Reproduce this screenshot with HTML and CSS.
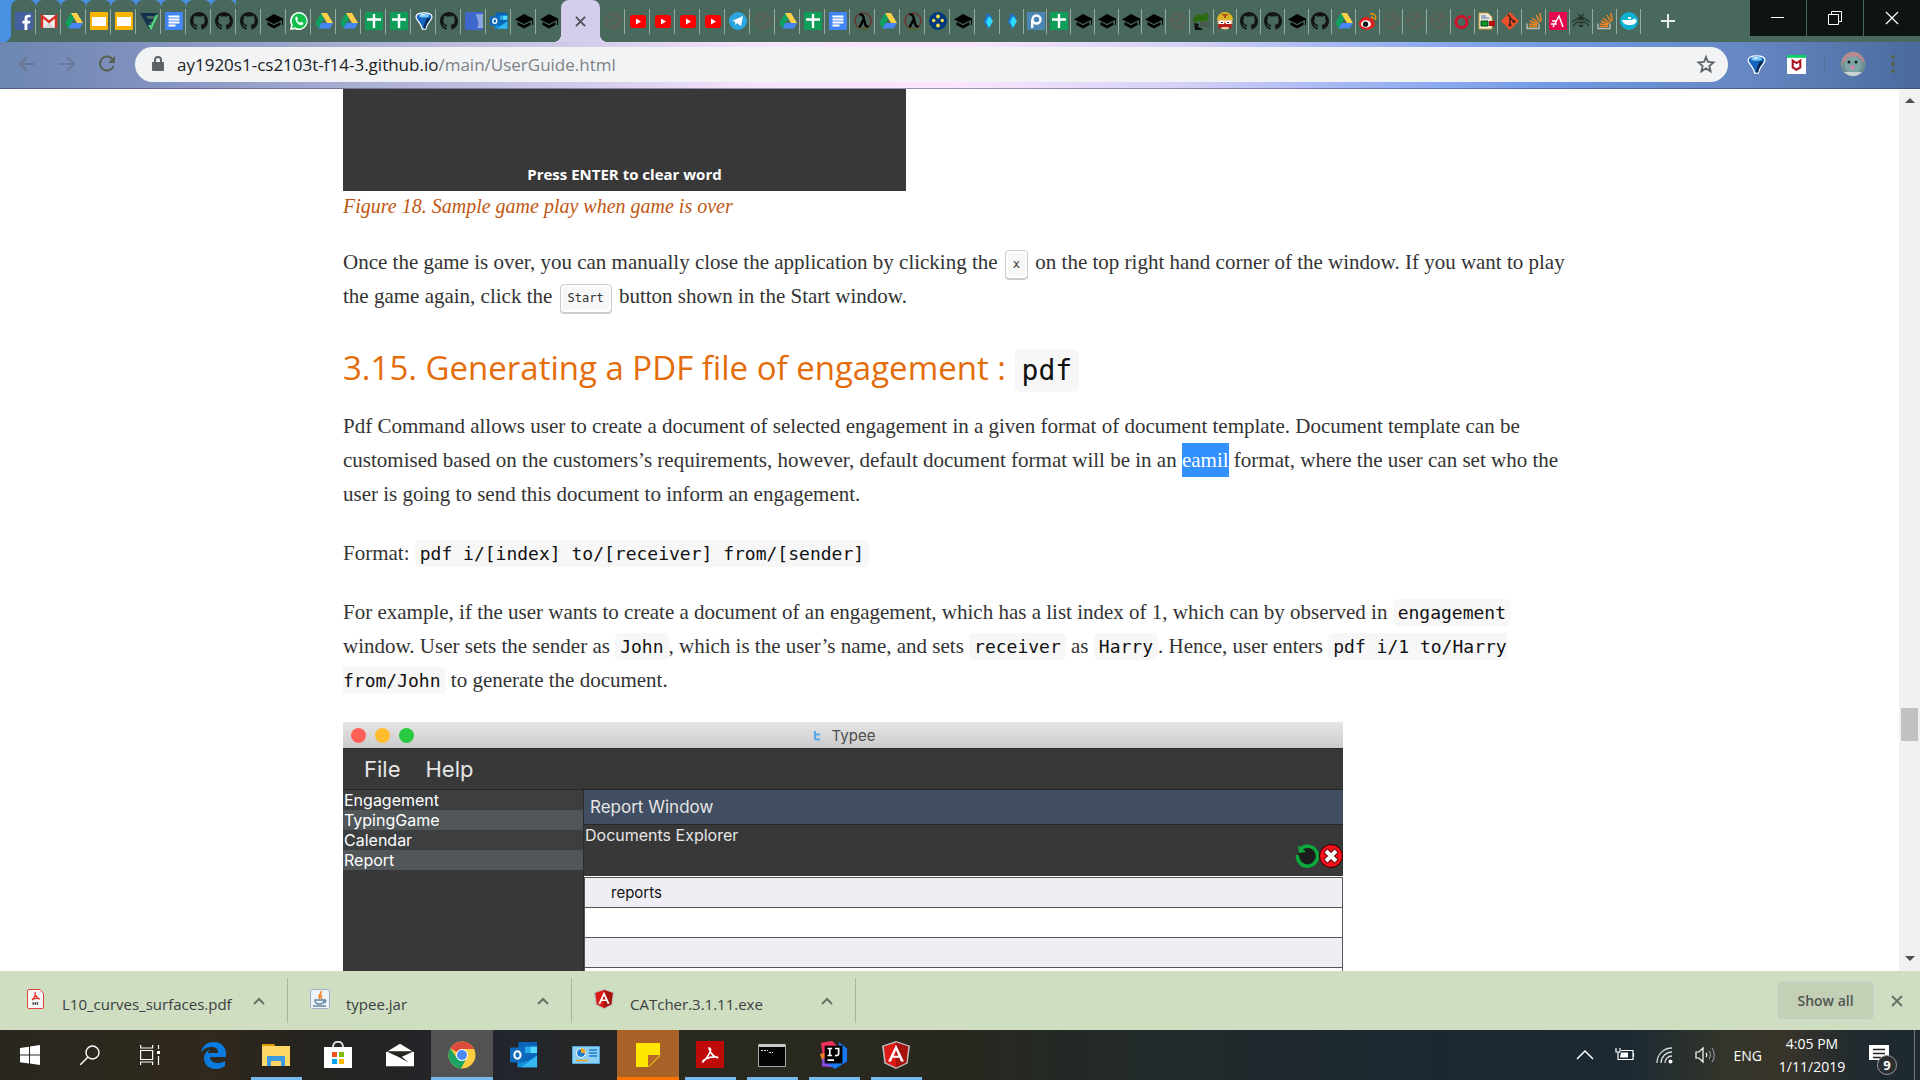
FILE: index.html
```html
<!DOCTYPE html>
<html lang="en">
<head>
<meta charset="utf-8">
<meta name="viewport" content="width=device-width, initial-scale=1">
<title>User Guide</title>
<link rel="stylesheet" href="styles.css">
</head>
<body>
<svg class="defs" aria-hidden="true">
  <defs>
    <symbol id="fb" viewBox="0 0 18 18"><path fill="#4460a0" d="M0 0h18v18H0z"/><path fill="#fff" d="M9.500 18v-6.500H7.300V8.700h2.200V6.500c0-2.600 1.400-3.800 3.700-3.800h2.300v2.600h-1.600c-1.200 0-1.500.5-1.500 1.500v1.900h3l-.4 2.800h-2.600V18z"/></symbol>
    <symbol id="gmail" viewBox="0 0 18 18"><path fill="#f2f2f2" d="M1 3h16v13H1z"/><path fill="#d9d9d9" d="M3 16l6-6 6 6z"/><path fill="none" stroke="#d93025" stroke-width="2.400" d="M2 16V4l7 6 7-6v12"/></symbol>
    <symbol id="drive" viewBox="0 0 18 18"><path fill="#11a15f" d="M6 1l3.300 5.400L3.500 16.500.3 11z"/><path fill="#ffcf48" d="M6 1h6l6 10h-6z"/><path fill="#4687f4" d="M6.500 11H18l-3.200 5.500H3.500z"/></symbol>
    <symbol id="slides" viewBox="0 0 18 18"><rect width="18" height="18" rx="1" fill="#f6b400"/><path fill="#fff" d="M2 5h14v9H2z"/></symbol>
    <symbol id="finance" viewBox="0 0 18 18"><path fill="#14304f" d="M0 1h18l-3 3H6l2 3h6l-2 3H9l2 3-2 4z"/><path fill="none" stroke="#4fd982" stroke-width="2.200" d="M9 13l2 3 6-13"/></symbol>
    <symbol id="docs" viewBox="0 0 18 18"><rect width="18" height="18" rx="1" fill="#4285f4"/><path stroke="#fff" stroke-width="1.800" d="M3.500 4.500h11M3.500 7.500h11M3.500 10.500h11M3.500 13.500h7"/></symbol>
    <symbol id="gh" viewBox="0 0 16 16"><path fill="#151515" d="M8 0C3.580 0 0 3.580 0 8c0 3.540 2.290 6.530 5.470 7.590.4.070.55-.17.55-.38v-1.490c-2.230.48-2.700-.95-2.700-.95-.36-.92-.89-1.170-.89-1.170-.73-.5.060-.49.060-.49.8.060 1.230.83 1.230.83.71 1.220 1.870.87 2.330.66.070-.52.28-.87.51-1.070-1.780-.2-3.640-.89-3.640-3.950 0-.87.310-1.590.82-2.150-.08-.2-.36-1.020.08-2.120 0 0 .67-.21 2.200.82a7.700 7.700 0 014 0c1.530-1.040 2.200-.82 2.200-.82.44 1.100.16 1.920.08 2.120.51.560.82 1.270.82 2.150 0 3.070-1.870 3.750-3.650 3.950.29.250.54.730.54 1.480v2.200c0 .21.150.46.550.38A8 8 0 0016 8c0-4.420-3.580-8-8-8z"/></symbol>
    <symbol id="cap" viewBox="0 0 18 18"><path fill="#000" d="M9 2l9 4.500V13h-1V8l-8 4-9-4.500z"/><path fill="#000" d="M2.500 10L9 13.300l6.500-3.300v3L9 16.500 2.500 13z"/></symbol>
    <symbol id="wa" viewBox="0 0 18 18"><path fill="#fff" d="M9 0a9 9 0 11-4 17.200L0 18l1-5A9 9 0 019 0z"/><path fill="#10c04a" d="M9 1.500a7.500 7.500 0 11-3.700 14L2 16l.8-3.200A7.500 7.500 0 019 1.500z"/><path fill="#fff" d="M5.500 5l1.500-.5L8 7l-.8 1.200c.6 1.200 1.500 2 2.800 2.600l1-1 2.400 1.200c0 1.500-1 2.200-2.200 2.200C8 13 4.600 9 5.500 5z"/></symbol>
    <symbol id="sheets" viewBox="0 0 18 18"><rect width="18" height="18" rx="1" fill="#0f9d58"/><path stroke="#fff" stroke-width="2.400" d="M9 2v14M2 7.500h14"/></symbol>
    <symbol id="balloon" viewBox="0 0 18 18"><path fill="#1565c0" stroke="#fff" stroke-width="1.200" d="M9 .8c5 0 8 1.500 8 4.200 0 2.500-3.800 5-5.500 9.500l-.8 2.700H7.300l-.8-2.700C4.800 10 1 7.500 1 5 1 2.300 4 .8 9 .8z"/><path fill="#7cc8f5" d="M9 1.500c3 0 5 .8 5 2.500 0 1-2.500 1.500-5 1.500S4 5 4 4c0-1.700 2-2.500 5-2.500z"/><path fill="#dff2fd" d="M6 2.500c1-.8 4-.8 4 0 0 1-4 1.500-4 0z"/><path fill="#0a2a55" d="M12 6h3.500c-1 2.500-3.500 4.500-4.500 8.500l-.5 2h-2c.5-4 2-7 3.500-10.500z"/></symbol>
    <symbol id="bluetile" viewBox="0 0 18 18"><path fill="#3f68cd" d="M0 0h18v18H0z"/><path fill="#8aa4e0" d="M11 2h7v14h-6c3-5 0-8-1-14z"/></symbol>
    <symbol id="outlook" viewBox="0 0 30 28"><path fill="#0a64b8" d="M9 0h20v27H9z"/><path fill="#28a8ea" d="M16 5h7v7h-7z"/><path fill="#50d9ff" d="M22 5h7v7h-7z"/><path fill="#1490df" d="M8 15l10 6 11-7v13H8z"/><path fill="#35b8f1" d="M12 27l17-12v12z"/><rect y="6" width="16" height="16" rx="1" fill="#0f6cbd"/><ellipse cx="8" cy="14" rx="3.300" ry="4" fill="none" stroke="#fff" stroke-width="2.200"/></symbol>
    <symbol id="globe" viewBox="0 0 18 18"><g fill="none" stroke="#635f56" stroke-width="1.400"><circle cx="9" cy="9" r="7.500"/><path d="M2 7c3-1 3 3 6 2 2-1 0-3 3-3 2 0 1-3 0-4M9 16c0-3 3-2 4-5 1-1 2 0 3-1"/></g></symbol>
    <symbol id="yt" viewBox="0 0 18 18"><rect x="1" y="3" width="16" height="13" rx="3" fill="#f00"/><path fill="#fff" d="M7 6.500l5 3-5 3z"/></symbol>
    <symbol id="tg" viewBox="0 0 18 18"><circle cx="9" cy="9" r="9" fill="#2ca5e0"/><path fill="#fff" d="M3 9l11-5-2 10-4-3-1.500 2-.5-3.500z"/></symbol>
    <symbol id="lambda" viewBox="0 0 18 18"><circle cx="9" cy="9" r="8" fill="none" stroke="#6e3330" stroke-width="1.500"/><path fill="none" stroke="#5a6b2a" stroke-width="1.500" d="M4 15a8 8 0 0011 0"/><path fill="none" stroke="#000" stroke-width="2.400" d="M5.500 2.500c4-1 4 3 5.500 9 .6 2.500 1.500 3.500 3.500 2.500M9.500 7.500l-4 8"/></symbol>
    <symbol id="dots" viewBox="0 0 18 18"><circle cx="9" cy="9" r="9" fill="#013a7c"/><g fill="#ffe04a"><circle cx="9" cy="4.500" r="1.900"/><circle cx="9" cy="13.500" r="1.900"/><circle cx="4.700" cy="8.500" r="1.700"/><circle cx="13.300" cy="8.500" r="1.700"/></g></symbol>
    <symbol id="diamond" viewBox="0 0 18 18"><path fill="#1976d2" d="M8 1l5 4-3 12-5-7z"/><path fill="#2fd8ff" d="M10 4l4 5-4 7-3-6z"/></symbol>
    <symbol id="p" viewBox="0 0 18 18"><path fill="#4b86b4" d="M0 0h18v18H0z"/><circle cx="9.500" cy="7.500" r="4" fill="none" stroke="#fff" stroke-width="2.400"/><path stroke="#fff" stroke-width="2.400" d="M5.200 16V8"/></symbol>
    <symbol id="tree" viewBox="0 0 18 18"><path fill="#2c6b12" d="M1 5l4-3 4 1 4-3 3 3-1 5-5 2-4-1-4 2-2-3z"/><path fill="#4c5a52" d="M7 10h10v5H7z"/><path fill="#111" d="M1 11l5 1-1 3 5 2-2 1H2z"/></symbol>
    <symbol id="mason" viewBox="0 0 18 18"><circle cx="9" cy="10" r="7.500" fill="#efc7a0"/><path fill="#d9b526" d="M1 8c0-5 4-8 8-8s8 3 8 8z"/><path fill="#a8531c" d="M6 2h6v1.500h-2V6H8V3.500H6z"/><path fill="#b71c1c" d="M2 12c4-1 10-1 14 0l-1 5-3-2H6l-3 2z"/><path fill="#fff" d="M3 9h5v3H3zM10 9h5v3h-5z"/><path fill="#333" d="M5 10h2v1H5zM11 10h2v1h-2z"/></symbol>
    <symbol id="weibo" viewBox="0 0 18 18"><path fill="#e02020" d="M0 12C0 7 6 4 9 5c1 0 1 1 1 2 3-1 5 0 4 2 3 1 3 6-3 8C6 19 0 16 0 12z"/><ellipse cx="7" cy="12" rx="5" ry="3.700" fill="#fff"/><circle cx="6.500" cy="12.200" r="2.600" fill="#111"/><path fill="none" stroke="#f39800" stroke-width="1.500" d="M11 2c4-1 7 2 5 6M12 5c2 0 2 1 2 2"/></symbol>
    <symbol id="oring" viewBox="0 0 18 18"><circle cx="7.500" cy="10" r="5.500" fill="none" stroke="#d0112b" stroke-width="3"/><circle cx="15.500" cy="5" r="1.700" fill="#d0112b"/></symbol>
    <symbol id="note" viewBox="0 0 18 18"><path fill="#f4ead0" stroke="#c9a24a" d="M1 1h9l4 4v12H1z"/><path stroke="#3b6ec5" d="M3 4h5M3 6h8"/><path fill="#0c9a18" stroke="#043" d="M3 9h7v5H3z"/><path fill="#b01010" d="M11 9h6v5h-6z"/></symbol>
    <symbol id="git" viewBox="0 0 18 18"><path fill="#f34f29" d="M9 0l9 9-9 9-9-9z"/><path fill="none" stroke="#38261f" stroke-width="1.500" d="M7 2.500l2 2.500v8M9 6l4 3.500"/><circle cx="9" cy="13" r="1.500" fill="#38261f"/><circle cx="13" cy="9.500" r="1.500" fill="#38261f"/></symbol>
    <symbol id="so" viewBox="0 0 18 18"><path fill="none" stroke="#b9bcb8" stroke-width="1.400" d="M2 11.500v5h12v-5"/><path stroke="#f08424" stroke-width="1.500" d="M4 14.500h8M4 12l8 1M5 9l7.500 3M7 6l6.500 5M11 3l4 7M15 1l1 8"/></symbol>
    <symbol id="ab" viewBox="0 0 18 18"><rect width="18" height="18" rx="1" fill="#e6094e"/><path fill="none" stroke="#fff" stroke-width="1.500" d="M3 9h5M2 12h6M4 15l6-11 4 11"/></symbol>
    <symbol id="bee" viewBox="0 0 18 18"><g fill="none" stroke="#24332c" stroke-width="1.200"><path d="M0 10l6-4 6 0 6 4M1 14l5-5M17 14l-5-5M6 2l3 3 3-3"/></g><ellipse cx="9" cy="9.500" rx="3" ry="6" fill="#24332c"/><path stroke="#617a6c" d="M6 9h6M6 12h6"/></symbol>
    <symbol id="docker" viewBox="0 0 18 18"><ellipse cx="9" cy="9" rx="9" ry="9" fill="#0db1d4"/><path fill="#fff" d="M2 8h9l3-1 2-1-1 2h2c-1 4-4 5-7 5-4 0-7-1-8-5zM8 5h3v2H8z"/></symbol>
    <symbol id="angular" viewBox="0 0 30 30"><path fill="#b9bcbd" d="M15 0l15 5-2.500 19L15 30 2.500 24 0 5z"/><path fill="#dd1b16" d="M15 1.500L28 6l-2 17-11 5.500L4 23 2 6z"/><path fill="#a6120d" d="M15 1.500L28 6l-2 17-11 5.500z"/><path fill="#fff" d="M15 4l8.500 18h-3.200l-1.700-4h-7.200l-1.700 4H6.500zm0 6l-2.500 5.700h5z"/></symbol>
    <symbol id="up" viewBox="0 0 12 8"><path fill="none" stroke="#6b7168" stroke-width="2" d="M1 7l5-5 5 5"/></symbol>
  </defs>
</svg>

<header class="browser">
  <nav class="tabstrip" aria-label="Open tabs">
    <div class="tabs tabs--first">
      <button class="tab tab--round tab--edge" aria-label="Facebook"><svg><use href="#fb"/></svg></button>
      <button class="tab tab--round" aria-label="Gmail"><svg><use href="#gmail"/></svg></button>
      <button class="tab tab--round" aria-label="Drive"><svg><use href="#drive"/></svg></button>
      <button class="tab tab--round" aria-label="Slides"><svg><use href="#slides"/></svg></button>
      <button class="tab tab--round" aria-label="Slides"><svg><use href="#slides"/></svg></button>
      <button class="tab tab--round" aria-label="Finance"><svg><use href="#finance"/></svg></button>
      <button class="tab tab--round" aria-label="Docs"><svg><use href="#docs"/></svg></button>
      <button class="tab tab--round" aria-label="GitHub"><svg><use href="#gh"/></svg></button>
      <button class="tab tab--round" aria-label="GitHub"><svg><use href="#gh"/></svg></button>
      <button class="tab" aria-label="GitHub"><svg><use href="#gh"/></svg></button>
      <button class="tab" aria-label="Courses"><svg><use href="#cap"/></svg></button>
      <button class="tab" aria-label="WhatsApp"><svg><use href="#wa"/></svg></button>
      <button class="tab" aria-label="Drive"><svg><use href="#drive"/></svg></button>
      <button class="tab" aria-label="Drive"><svg><use href="#drive"/></svg></button>
      <button class="tab" aria-label="Sheets"><svg><use href="#sheets"/></svg></button>
      <button class="tab" aria-label="Sheets"><svg><use href="#sheets"/></svg></button>
      <button class="tab" aria-label="Balloon"><svg><use href="#balloon"/></svg></button>
      <button class="tab" aria-label="GitHub"><svg><use href="#gh"/></svg></button>
      <button class="tab" aria-label="Page"><svg><use href="#bluetile"/></svg></button>
      <button class="tab" aria-label="Outlook"><svg><use href="#outlook"/></svg></button>
      <button class="tab" aria-label="Courses"><svg><use href="#cap"/></svg></button>
      <button class="tab tab--last" aria-label="Courses"><svg><use href="#cap"/></svg></button>
    </div>
    <button class="tab-active" aria-label="Close tab"><svg viewBox="0 0 12 12"><path stroke="#4f4f55" stroke-width="2" d="M1 1l10 10M11 1L1 11"/></svg></button>
    <div class="tabs tabs--middle">
      <button class="tab" aria-label="Page"><svg><use href="#globe"/></svg></button>
      <button class="tab" aria-label="YouTube"><svg><use href="#yt"/></svg></button>
      <button class="tab" aria-label="YouTube"><svg><use href="#yt"/></svg></button>
      <button class="tab" aria-label="YouTube"><svg><use href="#yt"/></svg></button>
      <button class="tab" aria-label="YouTube"><svg><use href="#yt"/></svg></button>
      <button class="tab" aria-label="Telegram"><svg><use href="#tg"/></svg></button>
      <button class="tab" aria-label="Page"><svg><use href="#globe"/></svg></button>
      <button class="tab" aria-label="Drive"><svg><use href="#drive"/></svg></button>
      <button class="tab" aria-label="Sheets"><svg><use href="#sheets"/></svg></button>
      <button class="tab" aria-label="Docs"><svg><use href="#docs"/></svg></button>
      <button class="tab" aria-label="Lambda"><svg><use href="#lambda"/></svg></button>
      <button class="tab" aria-label="Drive"><svg><use href="#drive"/></svg></button>
      <button class="tab" aria-label="Lambda"><svg><use href="#lambda"/></svg></button>
      <button class="tab" aria-label="Page"><svg><use href="#dots"/></svg></button>
      <button class="tab" aria-label="Courses"><svg><use href="#cap"/></svg></button>
      <button class="tab" aria-label="Page"><svg><use href="#diamond"/></svg></button>
    </div>
    <div class="tabs tabs--narrow">
      <button class="tab" aria-label="Page"><svg><use href="#diamond"/></svg></button>
      <button class="tab" aria-label="Page"><svg><use href="#p"/></svg></button>
      <button class="tab" aria-label="Sheets"><svg><use href="#sheets"/></svg></button>
      <button class="tab" aria-label="Courses"><svg><use href="#cap"/></svg></button>
      <button class="tab" aria-label="Courses"><svg><use href="#cap"/></svg></button>
      <button class="tab" aria-label="Courses"><svg><use href="#cap"/></svg></button>
      <button class="tab" aria-label="Courses"><svg><use href="#cap"/></svg></button>
      <button class="tab" aria-label="Page"><svg><use href="#globe"/></svg></button>
      <button class="tab" aria-label="Page"><svg><use href="#tree"/></svg></button>
      <button class="tab" aria-label="Page"><svg><use href="#mason"/></svg></button>
      <button class="tab" aria-label="GitHub"><svg><use href="#gh"/></svg></button>
      <button class="tab" aria-label="GitHub"><svg><use href="#gh"/></svg></button>
      <button class="tab" aria-label="Courses"><svg><use href="#cap"/></svg></button>
      <button class="tab" aria-label="GitHub"><svg><use href="#gh"/></svg></button>
      <button class="tab" aria-label="Drive"><svg><use href="#drive"/></svg></button>
      <button class="tab" aria-label="Weibo"><svg><use href="#weibo"/></svg></button>
      <button class="tab" aria-label="Page"><svg><use href="#globe"/></svg></button>
      <button class="tab" aria-label="Page"><svg><use href="#globe"/></svg></button>
      <button class="tab" aria-label="Page"><svg><use href="#globe"/></svg></button>
      <button class="tab" aria-label="Page"><svg><use href="#oring"/></svg></button>
      <button class="tab" aria-label="Page"><svg><use href="#note"/></svg></button>
      <button class="tab" aria-label="Git"><svg><use href="#git"/></svg></button>
      <button class="tab" aria-label="Stack Overflow"><svg><use href="#so"/></svg></button>
      <button class="tab" aria-label="Page"><svg><use href="#ab"/></svg></button>
      <button class="tab" aria-label="Page"><svg><use href="#bee"/></svg></button>
      <button class="tab" aria-label="Stack Overflow"><svg><use href="#so"/></svg></button>
      <button class="tab" aria-label="Docker"><svg><use href="#docker"/></svg></button>
    </div>
    <button class="newtab" aria-label="New tab"><svg viewBox="0 0 14 14"><path stroke="#e6ece9" stroke-width="2" d="M7 0v14M0 7h14"/></svg></button>
    <div class="winctl">
      <button aria-label="Minimize"><svg viewBox="0 0 14 14"><path stroke="#fff" d="M0 6.500h13"/></svg></button>
      <button aria-label="Restore"><svg viewBox="0 0 14 14"><path fill="none" stroke="#fff" d="M.5 3.500h10v10H.5zM3.500 3V.5h10v10H11"/></svg></button>
      <button aria-label="Close"><svg viewBox="0 0 14 14"><path stroke="#fff" stroke-width="1.200" d="M1 1l12 12M13 1L1 13"/></svg></button>
    </div>
  </nav>
  <div class="toolbar">
    <button class="nav" aria-label="Back"><svg viewBox="0 0 18 18"><path fill="none" stroke="#6a7795" stroke-width="2" d="M17 9H2M9 2L2 9l7 7"/></svg></button>
    <button class="nav" aria-label="Forward"><svg viewBox="0 0 18 18"><path fill="none" stroke="#6c7897" stroke-width="2" d="M1 9h15M9 2l7 7-7 7"/></svg></button>
    <button class="nav" aria-label="Reload"><svg viewBox="0 0 18 18"><path fill="none" stroke="#56624f" stroke-width="2" d="M15.500 11A7 7 0 1115 5"/><path fill="#56624f" d="M17 1v7h-7z"/></svg></button>
    <div class="omnibox">
      <svg class="lock" viewBox="0 0 12 16"><path fill="#5f6368" d="M0 6h12v8a1 1 0 01-1 1H1a1 1 0 01-1-1z"/><path fill="none" stroke="#5f6368" stroke-width="2" d="M3 7V4a3 3 0 016 0v3"/></svg>
      <span class="url"><span class="host">ay1920s1-cs2103t-f14-3.github.io</span>/main/UserGuide.html</span>
      <button class="star" aria-label="Bookmark"><svg viewBox="0 0 20 20"><path fill="none" stroke="#5f6368" stroke-width="1.800" d="M10 3l2 5 5.500.4-4.200 3.600 1.300 5.300L10 14.400l-4.600 2.900L6.700 12 2.500 8.400 8 8z"/></svg></button>
    </div>
    <button class="ext" aria-label="Balloon"><svg viewBox="0 0 18 18"><use href="#balloon"/></svg></button>
    <button class="ext" aria-label="Shield"><svg viewBox="0 0 20 20"><path fill="#fff" d="M0 0h20v20H0z"/><path fill="#0bd06a" d="M0 0h20v3H0z"/><path fill="none" stroke="#a81520" stroke-width="2.200" d="M6 6l4 2.500L14 6v7l-4 2.500L6 13z"/></svg></button>
    <span class="rule"></span>
    <button class="avatar" aria-label="Profile"><svg viewBox="0 0 26 26"><circle cx="13" cy="13" r="12.500" fill="#6f8f93"/><path fill="#b98a92" d="M3 7C8-1 18-1 23 7l2 6-4-4-4-4-4 3-4-2-5 5-3 4z"/><circle cx="13" cy="14" r="8.500" fill="#7ea5a6"/><circle cx="9" cy="11" r="1.500" fill="#122"/><circle cx="16" cy="11" r="1.500" fill="#122"/><path fill="#f07aa5" d="M10 15h5l-2.500 4z"/><path fill="#c9d3d4" d="M4 21h18a12 12 0 01-18 0z"/></svg></button>
    <button class="more" aria-label="Menu"><svg viewBox="0 0 4 18"><g fill="#56624f"><circle cx="2" cy="2" r="2"/><circle cx="2" cy="9" r="2"/><circle cx="2" cy="16" r="2"/></g></svg></button>
  </div>
</header>

<div class="viewport">
  <main class="page">
    <article class="content">
      <figure class="game">
        <div class="game-shot">Press ENTER to clear word</div>
        <figcaption>Figure 18. Sample game play when game is over</figcaption>
      </figure>
      <p>Once the game is over, you can manually close the application by clicking the <kbd>x</kbd> on the top right hand corner of the window. If you want to play the game again, click the <kbd>Start</kbd> button shown in the Start window.</p>
      <h3>3.15. Generating a PDF file of engagement : <code>pdf</code></h3>
      <p>Pdf Command allows user to create a document of selected engagement in a given format of document template. Document template can be customised based on the customers’s requirements, however, default document format will be in an <mark>eamil</mark> format, where the user can set who the user is going to send this document to inform an engagement.</p>
      <p>Format: <code>pdf i/[index] to/[receiver] from/[sender]</code></p>
      <p>For example, if the user wants to create a document of an engagement, which has a list index of 1, which can by observed in <code>engagement</code> window. User sets the sender as <code>John</code>, which is the user’s name, and sets <code>receiver</code> as <code>Harry</code>. Hence, user enters <code>pdf i/1 to/Harry from/John</code> to generate the document.</p>

      <section class="typee">
        <div class="typee-title">
          <div class="lights"><i class="red"></i><i class="amber"></i><i class="green"></i></div>
          <div class="typee-name"><svg viewBox="0 0 8 10"><path fill="none" stroke="#55a8ee" stroke-width="2.200" d="M2 0v6.500C2 8 3 8.500 4 8.500h3M2 3.500h5"/></svg>Typee</div>
        </div>
        <div class="typee-menu"><span>File</span><span>Help</span></div>
        <div class="typee-body">
          <ul class="typee-side"><li>Engagement</li><li>TypingGame</li><li>Calendar</li><li>Report</li></ul>
          <div class="typee-main">
            <div class="typee-head">Report Window</div>
            <div class="typee-tools">
              <span>Documents Explorer</span>
              <div class="typee-actions">
                <button aria-label="Refresh"><svg viewBox="0 0 24 24"><circle cx="12" cy="12" r="9" fill="#1c1c1c"/><path fill="none" stroke="#0ca93c" stroke-width="3.500" d="M2.500 11A10 10 0 106 4.500"/><path fill="#0ca93c" d="M3 1l1 8 7-1z"/></svg></button>
                <button aria-label="Delete"><svg viewBox="0 0 24 24"><circle cx="12" cy="12" r="11.500" fill="#f5101c" stroke="#200" /><path stroke="#400" stroke-width="6" d="M6.500 6.500l11 11M17.500 6.500l-11 11"/><path stroke="#fff" stroke-width="4" d="M7 7l10 10M17 7L7 17"/></svg></button>
              </div>
            </div>
            <table class="reports">
              <tbody><tr><td>reports</td></tr><tr><td></td></tr><tr><td></td></tr><tr><td></td></tr></tbody>
            </table>
          </div>
        </div>
      </section>
    </article>
  </main>
  <div class="scrollbar" aria-hidden="true">
    <svg viewBox="0 0 10 6"><path fill="#505050" d="M0 5l5-5 5 5z"/></svg>
    <div class="before"></div>
    <div class="thumb"></div>
    <div class="after"></div>
    <svg viewBox="0 0 10 6"><path fill="#505050" d="M0 0l5 5 5-5z"/></svg>
  </div>
</div>

<section class="downloads" aria-label="Downloads">
  <div class="download">
    <svg viewBox="0 0 18 20"><path fill="#f6f6f6" stroke="#e0453a" d="M2 .5h11l3.500 4V18a1.500 1.500 0 01-1.500 1.500H2A1.500 1.500 0 01.5 18V2A1.500 1.500 0 012 .5z"/><path fill="none" stroke="#e8332a" stroke-width="1.300" d="M8 3c1 3-1 6-3 8 2-2 6-2 8-1-3-1-5-4-5-7z"/><path stroke="#444" stroke-width="2.500" stroke-dasharray="1.500 .6" d="M5.500 14.500h6"/></svg>
    <a href="#">L10_curves_surfaces.pdf</a>
    <button aria-label="Options"><svg><use href="#up"/></svg></button>
  </div>
  <div class="download">
    <svg viewBox="0 0 20 20"><rect x=".5" y=".5" width="19" height="19" rx="2" fill="#eef3f8" stroke="#9db1c6"/><path fill="none" stroke="#ee7d22" stroke-width="1.500" d="M11 2c1 3-4 4-1 8M12 6c-2 1-1 2 0 4"/><path fill="none" stroke="#6787a6" stroke-width="1.500" d="M5 11h9c0 3-1 4-4.500 4S5 14 5 11zM14 11c3-1 2 3-1 3M3 17h13"/></svg>
    <a href="#">typee.jar</a>
    <button aria-label="Options"><svg><use href="#up"/></svg></button>
  </div>
  <div class="download">
    <svg viewBox="0 0 30 30"><use href="#angular"/></svg>
    <a href="#">CATcher.3.1.11.exe</a>
    <button aria-label="Options"><svg><use href="#up"/></svg></button>
  </div>
  <button class="showall">Show all</button>
  <button class="dismiss" aria-label="Close downloads"><svg viewBox="0 0 12 12"><path stroke="#6b7168" stroke-width="2" d="M1 1l10 10M11 1L1 11"/></svg></button>
</section>

<footer class="taskbar">
  <div class="apps">
    <div class="system">
      <button aria-label="Start"><svg viewBox="0 0 20 20"><path fill="#fff" d="M0 3l9-1.300V9.500H0zM10 1.500L20 0v9.500H10zM0 10.500h9v8L0 17.200zM10 10.500h10V20l-10-1.500z"/></svg></button>
      <button aria-label="Search"><svg viewBox="0 0 20 20"><circle cx="12.500" cy="7.500" r="6.500" fill="none" stroke="#fff" stroke-width="1.400"/><path stroke="#fff" stroke-width="1.400" d="M8 12l-8 8"/></svg></button>
      <button aria-label="Task view"><svg viewBox="0 0 20 20"><path fill="none" stroke="#fff" stroke-width="1.200" d="M.6 0v3h12V0M.6 20v-3h12v3M.6 5.500h12v9H.6zM18.500 0v4M18.500 11v9"/><path fill="#fff" d="M17 6h3v3h-3z"/></svg></button>
    </div>
    <button aria-label="Edge"><svg class="big" viewBox="0 0 28 28"><path fill="#0a7ce0" d="M1 12C2 4 8 1 14 1c8 0 12 6 12 12v3H10c0 4 4 6 8 6 3 0 5-1 7-2v5c-3 2-6 3-9 3C9 28 4 24 4 17c0-4 3-7 6-9-1 1-2 3-2 4h10c0-4-2-6-6-6-5 0-9 2-11 6z"/></svg></button>
    <button class="open" aria-label="File Explorer"><svg class="big" viewBox="0 0 28 28"><path fill="#e09a00" d="M0 3h12l2 3H0z"/><path fill="#ffd767" d="M0 5h28v20H0z"/><path fill="#3f9be0" d="M5 25V15h18v10h-4v-5H9v5z"/></svg></button>
    <button aria-label="Store"><svg class="big" viewBox="0 0 28 28"><path fill="none" stroke="#ddd" stroke-width="2" d="M9 6c0-7 10-7 10 0"/><path fill="#fff" d="M0 6h28v21H0z"/><path fill="#f25022" d="M8 11h5v5H8z"/><path fill="#7fba00" d="M15 11h5v5h-5z"/><path fill="#00a4ef" d="M8 18h5v5H8z"/><path fill="#ffb900" d="M15 18h5v5h-5z"/></svg></button>
    <button aria-label="Mail"><svg class="big" viewBox="0 0 30 28"><path fill="#fff" d="M0 11L15 2l15 9v15H0z"/><path fill="#26241f" d="M0 10h30l-13 6 7 6-11-6z"/></svg></button>
    <button class="open current" aria-label="Chrome"><svg class="big" viewBox="0 0 28 28"><circle cx="14" cy="14" r="13.500" fill="#ffcd40"/><path fill="#dd4b3e" d="M14 14L2.300 7.200A13.500 13.500 0 0125.700 7.200L26 8H14z"/><path fill="#1da362" d="M2.300 7.200A13.500 13.500 0 0013 27.500l5.500-10L9 17z"/><circle cx="14" cy="14" r="6" fill="#fff"/><circle cx="14" cy="14" r="5" fill="#4c8bf5"/></svg></button>
    <button aria-label="Outlook"><svg class="big" viewBox="0 0 30 28"><use href="#outlook"/></svg></button>
    <button aria-label="Control panel"><svg class="big" viewBox="0 0 28 28"><path fill="#8fd0f2" stroke="#4da6dc" d="M.5 5.500h27v17H.5z"/><circle cx="9" cy="12" r="4.500" fill="#1c7cd0" stroke="#fff"/><path fill="#f4a11c" d="M9 12V7a5 5 0 014.500 5z"/><path stroke="#1c7cd0" stroke-width="1.500" d="M17 9h8M17 12h8M17 15h8"/><path stroke="#f4a11c" stroke-width="1.500" d="M4 19.500h12"/></svg></button>
    <button class="notes" aria-label="Sticky Notes"><svg class="big" viewBox="0 0 28 28"><path fill="#ffe600" d="M2 2h24v13L15 26H2z"/><path fill="#b5682a" d="M14 26V14h12z"/></svg></button>
    <button class="open" aria-label="Acrobat"><svg class="big" viewBox="0 0 28 28"><path fill="#c00a0a" d="M0 0h28v27H0z"/><path fill="none" stroke="#fff" stroke-width="1.600" d="M13 7c4 0 0 8-6 14-2 0 4-6 14-5 3 2-6 0-8-9z"/></svg></button>
    <button class="open" aria-label="Command prompt"><svg class="big" viewBox="0 0 28 28"><path fill="#050505" stroke="#a9a9a9" d="M.5 3.500h27v22H.5z"/><path fill="#c9c9c9" d="M1 3h26v3H1z"/><path stroke="#ddd" stroke-dasharray="2 1" d="M3 9.500h7M11 11.500h4"/></svg></button>
    <button class="open" aria-label="IntelliJ IDEA"><svg class="big" viewBox="0 0 30 30"><path fill="#f5315f" d="M1 2l12-2 8 8-18 8z"/><path fill="#f58020" d="M0 14l8-2v12l-6-4z"/><path fill="#8c4be8" d="M3 18l8 4 3 6-12-1z"/><path fill="#1878f0" d="M20 1l9 7v14L16 30l-8-6 14-8z"/><path fill="#000" d="M5 5h19v19H5z"/><path fill="none" stroke="#fff" stroke-width="1.800" d="M8 8h5M10.500 8v7M8 15.500h5M16 8h4v5c0 2-1 3-4 2.500M8 20.500h7"/></svg></button>
    <button class="open" aria-label="CATcher"><svg class="big" viewBox="0 0 30 30"><use href="#angular"/></svg></button>
  </div>
  <div class="tray">
    <button aria-label="Hidden icons"><svg viewBox="0 0 20 20"><path fill="none" stroke="#fff" stroke-width="1.500" d="M2 14l8-8 8 8"/></svg></button>
    <button aria-label="Battery"><svg viewBox="0 0 20 20"><path fill="none" stroke="#fff" stroke-width="1.200" d="M6 5.500h12v9H3V10M18.500 8.500v3M1 3v4h4V3M3 7v4"/><path fill="#fff" d="M6 7.500h7v5H5z"/></svg></button>
    <button aria-label="Network"><svg viewBox="0 0 20 20"><g fill="none" stroke="#d5d9dc" stroke-width="1.300"><path d="M2 18C2 9 9 3 17 3M6 18c0-6 5-11 11-11M10 18c0-4 3-7 7-7"/></g><circle cx="15.500" cy="16.500" r="2" fill="#fff"/></svg></button>
    <button aria-label="Volume"><svg viewBox="0 0 20 20"><path fill="none" stroke="#fff" stroke-width="1.200" d="M1 7h3l4-4v14l-4-4H1zM11 8c1 1 1 3 0 4"/><path fill="none" stroke="#8c9499" stroke-width="1.200" d="M14 6c2 2 2 6 0 8M17 3c3 4 3 10 0 14"/></svg></button>
    <span class="lang">ENG</span>
    <div class="clock"><span>4:05 PM</span><span>1/11/2019</span></div>
    <button class="notif" aria-label="Notifications"><svg viewBox="0 0 20 20"><path fill="#fff" d="M0 0h20v15h-7l-4 4v-4H0z"/><path stroke="#222" stroke-width="1.300" d="M4 4.500h12M4 8.500h12M4 12.500h8"/></svg><span class="count">9</span></button>
    <span class="peek"></span>
  </div>
</footer>
</body>
</html>
```
FILE: styles.css
```css
* { box-sizing: border-box; }

body {
  margin: 0;
  height: 100vh;
  display: flex;
  flex-direction: column;
  overflow: hidden;
  background: #fff;
  font-family: "Open Sans", "Noto Sans", sans-serif;
}

button {
  display: flex;
  align-items: center;
  justify-content: center;
  flex: none;
  margin: 0;
  padding: 0;
  border: 0;
  background: none;
  font: inherit;
  color: inherit;
}

svg { display: block; flex: none; }
.defs { position: absolute; width: 0; height: 0; }

/* Tab strip */
.tabstrip {
  display: flex;
  height: 42px;
  padding-left: 11px;
  background: linear-gradient(90deg, #4a90e2 240px, #48695b 240px);
}

.tabs { display: flex; min-width: 0; }
.tabs--first { flex: 0 1 550px; }
.tabs--middle { flex: 0 1 400px; }
.tabs--narrow { flex: 0 1 641px; }

.tab {
  position: relative;
  flex: 1 1 0;
  min-width: 0;
  overflow: visible;
  background: #48695b;
}
.tab--round { border-radius: 7px 7px 0 0; }
.tab svg { width: 18px; height: 18px; }

.tab::after {
  content: "";
  position: absolute;
  right: 0;
  top: 9px;
  width: 1px;
  height: 25px;
  background: #96aba1;
}
.tab--last::after { display: none; }

.tab--edge::before {
  content: "";
  position: absolute;
  left: -8px;
  bottom: 0;
  width: 8px;
  height: 8px;
  background: radial-gradient(circle at 0 0, transparent 8px, #48695b 8px);
}

.tab-active {
  position: relative;
  width: 39px;
  border-radius: 8px 8px 0 0;
  background: #d5cdec;
}
.tab-active svg { width: 11px; height: 11px; }
.tab-active::before,
.tab-active::after {
  content: "";
  position: absolute;
  z-index: 1;
  bottom: 0;
  width: 8px;
  height: 8px;
}
.tab-active::before { left: -8px; background: radial-gradient(circle at 0 0, transparent 8px, #d5cdec 8px); }
.tab-active::after { right: -8px; background: radial-gradient(circle at 100% 0, transparent 8px, #d5cdec 8px); }

.newtab { width: 54px; }
.newtab svg { width: 14px; height: 14px; }

.winctl {
  display: flex;
  gap: 1px;
  height: 36px;
  margin-left: auto;
}
.winctl button { width: 56px; background: #0e1412; }
.winctl svg { width: 14px; height: 14px; }

/* Toolbar */
.toolbar {
  display: flex;
  align-items: center;
  height: 47px;
  padding: 0 12px 2px 7px;
  border-bottom: 1px solid rgba(60, 60, 100, .5);
  background: linear-gradient(90deg, #6d86b2 0%, #8090bd 7%, #c0bfe0 25%, #d5cdec 31%, #f6e2fb 39%, #fbe6fd 50%, #d3d0f6 62%, #a9b9f4 69%, #86a7f0 76%, #6f96df 82%, #6587c2 91%, #4a6a9e 100%);
}
.nav { width: 40px; height: 34px; }
.nav svg { width: 18px; height: 18px; }

.omnibox {
  display: flex;
  align-items: center;
  flex: 1;
  height: 35px;
  margin: 0 8px;
  padding: 0 12px 0 17px;
  border-radius: 18px;
  background: #f1f3f4;
}
.lock { width: 12px; height: 16px; }
.url { flex: 1; margin-left: 13px; font-size: 17px; color: #7e8286; }
.host { color: #202124; }
.star svg { width: 20px; height: 20px; }

.ext { width: 40px; }
.ext svg { width: 19px; height: 19px; }
.rule { width: 1px; height: 20px; margin: 0 15px 0 8px; background: #5a7299; }
.avatar svg { width: 26px; height: 26px; }
.more { width: 30px; margin-left: 12px; }
.more svg { width: 4px; height: 18px; }

/* Page viewport */
.viewport { display: flex; flex: 1; min-height: 0; }
.page { flex: 1; min-width: 0; overflow: hidden; }

.content {
  max-width: 1213px;
  margin: 0 auto;
  font-family: "Liberation Serif", "Times New Roman", serif;
  font-size: 21px;
  line-height: 34px;
  color: #333;
}
.content p { margin: 0 -16px 25px 0; }

.game { margin: 0 0 24px; }
.game-shot {
  display: flex;
  align-items: flex-end;
  justify-content: center;
  width: 563px;
  max-width: 100%;
  height: 102px;
  padding-bottom: 5px;
  background: #383838;
  color: #fff;
  font: bold 15px/24px "Open Sans", sans-serif;
}
.game figcaption { padding-top: 1px; font-size: 20px; font-style: italic; line-height: 29px; color: #bf5712; }

.content h3 {
  margin: 34px 0 20px;
  font-family: "Open Sans", sans-serif;
  font-size: 33px;
  font-weight: 400;
  line-height: 42px;
  color: #e46c0a;
}

code {
  padding: 3px 5px;
  border-radius: 5px;
  background: #f7f7f8;
  color: #111;
  font-family: "DejaVu Sans Mono", monospace;
  font-size: 18px;
  line-height: 20px;
}
h3 code { padding: 5px 7px; font-size: 28px; }

kbd {
  display: inline-block;
  margin: 0 2px;
  padding: 5px 7px;
  border: 1px solid #ccc;
  border-radius: 4px;
  background: #f7f7f7;
  box-shadow: 0 1px 0 rgba(0, 0, 0, .2), inset 0 0 0 2px #fff;
  font-family: "DejaVu Sans Mono", monospace;
  font-size: 12px;
  line-height: 17px;
  vertical-align: middle;
}

mark { padding: 5px 0; background: #3390ff; color: #fff; }

/* Typee application window */
.typee {
  max-width: 1000px;
  background: #383838;
  color: #e6e6e6;
  font-family: Inter, Roboto, sans-serif;
  font-size: 16px;
  line-height: 20px;
}
.typee-title {
  display: grid;
  grid-template-columns: 1fr auto 1fr;
  align-items: center;
  height: 26px;
  padding: 1px 6px 0 8px;
  background: linear-gradient(#e6e6e6, #cbcbcb);
  color: #4c4c4c;
  font-size: 15px;
}
.lights { display: flex; gap: 9px; }
.lights i { width: 15px; height: 15px; border-radius: 50%; }
.red { background: #ff5f57; }
.amber { background: #ffbd2e; }
.green { background: #28c940; }
.typee-name { display: flex; align-items: center; gap: 11px; }
.typee-name svg { width: 8px; height: 10px; }

.typee-menu {
  display: flex;
  align-items: center;
  gap: 25px;
  height: 42px;
  padding-left: 21px;
  border-top: 1px solid #2a2a2a;
  border-bottom: 1px solid #262626;
  font-size: 22px;
}
.typee-body { display: flex; }
.typee-side { width: 241px; margin: 0; padding: 0; list-style: none; border-right: 1px solid #2a2a2a; color: #fff; }
.typee-side li { padding-left: 1px; background: #3c3e3f; }
.typee-side li:nth-child(even) { background: #515658; }
.typee-main { flex: 1; min-width: 0; }
.typee-head { height: 35px; padding: 8px 6px; border-bottom: 1px solid #262626; background: #414d60; font-size: 17px; line-height: 19px; }
.typee-tools { display: flex; justify-content: space-between; height: 52px; padding-left: 1px; border-bottom: 1px solid #fff; }
.typee-actions { display: flex; align-items: flex-end; padding-bottom: 8px; }
.typee-actions svg { width: 24px; height: 24px; }

.reports { width: 100%; border-collapse: collapse; border: 1px solid #555; background: #fff; color: #111; }
.reports td { height: 30px; padding: 0 26px; border: 1px solid #555; font-size: 15px; }
.reports tr:nth-child(odd) { background: #efeef4; }

/* Scroll bar */
.scrollbar {
  display: flex;
  flex-direction: column;
  align-items: center;
  width: 21px;
  padding: 9px 0;
  background: #f1f1f1;
}
.scrollbar svg { width: 10px; height: 6px; }
.before { flex: 604; }
.thumb { width: 17px; height: 33px; background: #c1c1c1; }
.after { flex: 215; }

/* Download shelf */
.downloads {
  display: flex;
  align-items: center;
  height: 59px;
  padding: 0 17px 0 4px;
  background: #cfddc0;
  color: #3c4043;
  font-size: 15px;
}
.download {
  display: flex;
  align-items: center;
  flex: 0 1 284px;
  height: 45px;
  padding: 0 22px;
  border-right: 1px solid #a9b59d;
}
.download > svg { width: 20px; height: 20px; margin-bottom: 3px; }
.download a { flex: 1; margin-left: 16px; padding-top: 7px; color: inherit; text-decoration: none; }
.download button svg { width: 12px; height: 8px; }
.showall {
  width: 97px;
  height: 39px;
  margin-left: auto;
  border: 1px solid #cfd6cf;
  border-radius: 4px;
  background: #c4d0b6;
  color: #4e5550;
  font-size: 14px;
  font-weight: 600;
}
.dismiss { margin-left: 17px; }
.dismiss svg { width: 12px; height: 12px; }

/* Taskbar */
.taskbar {
  display: flex;
  justify-content: space-between;
  height: 50px;
  background: linear-gradient(90deg, #29271f 0%, #30291d 11%, #25231f 16%, #22252d 26%, #29291f 36%, #28281f 50%, #222a2b 60%, #1b2831 75%, #1d2a33 85%, #34352a 90%, #38342a 93%, #202a30 97%, #1e2930 100%);
  color: #fff;
}
.apps, .system { display: flex; }
.system { margin-right: 3px; }
.apps button { width: 62px; border-bottom: 3px solid transparent; border-top: 3px solid transparent; }
.apps .system button { width: 60px; }
.apps svg { width: 20px; height: 20px; }
.apps .big { width: 28px; height: 28px; }
.open { background: linear-gradient(#76b9ed, #76b9ed) center bottom / 51px 3px no-repeat border-box; }
.apps .current { border-bottom-color: #76b9ed; background: #525252; }
.apps .notes { border-bottom-color: #ff7300; background: #a86228; }

.tray { display: flex; align-items: center; font-size: 14px; }
.tray > button { width: 40px; height: 50px; }
.tray svg { width: 20px; height: 20px; }
.lang { margin: 0 4px 0 9px; }
.clock { display: flex; flex-direction: column; align-items: center; width: 92px; line-height: 23px; }
.tray .notif { position: relative; width: 42px; }
.count {
  position: absolute;
  right: 3px;
  bottom: 5px;
  width: 20px;
  height: 20px;
  border: 1px solid #999;
  border-radius: 50%;
  background: #2b2e31;
  font-size: 13px;
  font-weight: 700;
  line-height: 18px;
  text-align: center;
}
.peek { width: 6px; height: 50px; margin-left: 14px; border-left: 1px solid #71787c; }
```
